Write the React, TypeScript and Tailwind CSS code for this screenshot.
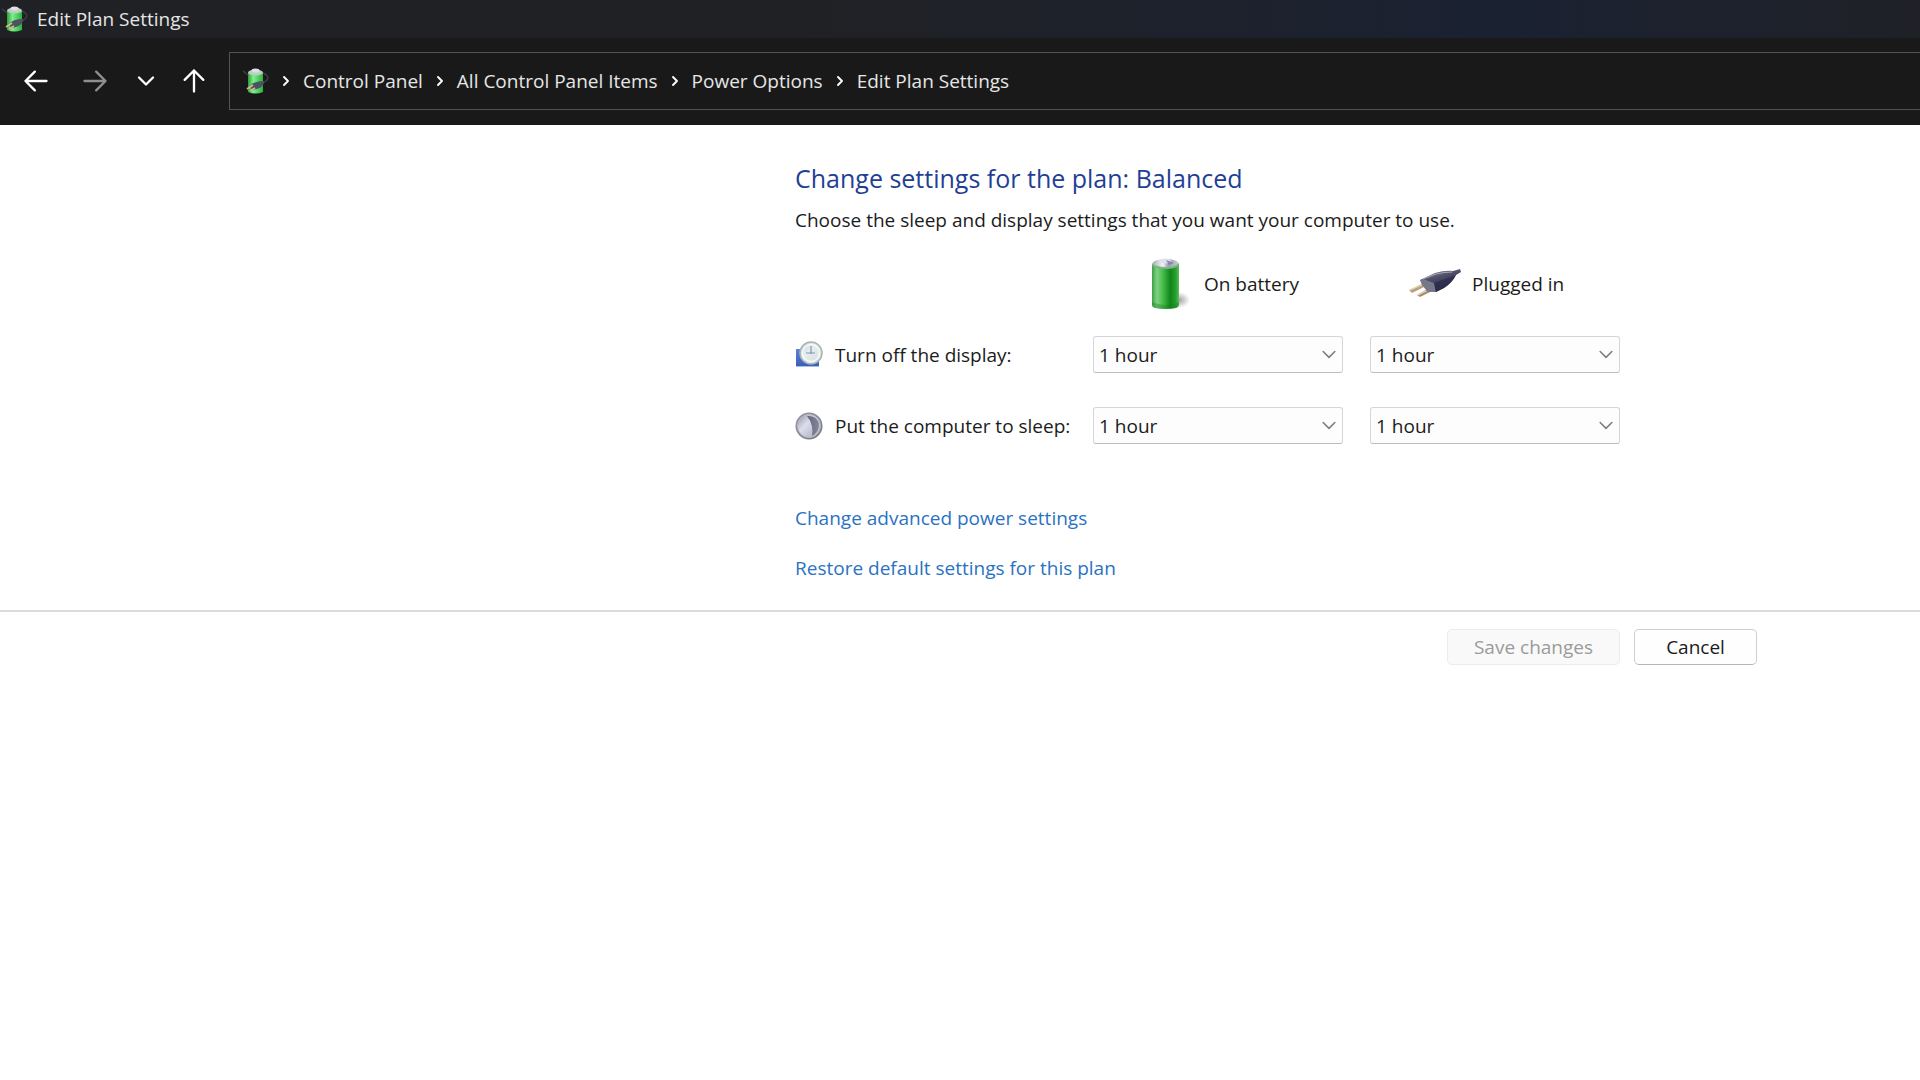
import { Fragment, ReactNode, useState } from 'react';

const breadcrumbs = ['Control Panel', 'All Control Panel Items', 'Power Options', 'Edit Plan Settings'];

const durations = [
    '1 minute',
    '5 minutes',
    '10 minutes',
    '15 minutes',
    '30 minutes',
    '1 hour',
    '2 hours',
    '5 hours',
    'Never',
];

function PowerPlanIcon() {
    return (
        <svg className="h-7 w-7 shrink-0" viewBox="0 0 28 28" aria-hidden="true">
            <defs>
                <linearGradient id="plan-body" x1="0" x2="1" y1="0" y2="0">
                    <stop offset="0" stopColor="#2f9a3c" />
                    <stop offset="0.35" stopColor="#7cf08a" />
                    <stop offset="1" stopColor="#2bb03c" />
                </linearGradient>
            </defs>
            <path d="M1 4l5 4M21 6q7 3 4 7l-5 4" fill="none" stroke="#3d3f48" strokeWidth="1.5" />
            <path d="M6 6v19q7 3 15 0V6z" fill="url(#plan-body)" />
            <ellipse cx="13.5" cy="5.5" rx="7.5" ry="3" fill="#b9cfc0" />
            <ellipse cx="13.5" cy="3.5" rx="4" ry="2" fill="#dcdfe6" />
            <path d="M8 19q4-5 14-5 0 6-7 8l-5 1z" fill="#4b5360" />
            <path d="M11 18l-6 4M13 21l-5 3" stroke="#cdb98a" strokeWidth="1.8" />
        </svg>
    );
}

function BatteryIcon() {
    return (
        <svg className="h-[54px] w-10 shrink-0" viewBox="0 0 40 54" aria-hidden="true">
            <defs>
                <linearGradient id="battery-body" x1="0" x2="1" y1="0" y2="0">
                    <stop offset="0" stopColor="#3f9f45" />
                    <stop offset="0.18" stopColor="#7fd184" />
                    <stop offset="0.4" stopColor="#46bd4b" />
                    <stop offset="0.68" stopColor="#11851a" />
                    <stop offset="0.88" stopColor="#27a02f" />
                    <stop offset="1" stopColor="#63b867" />
                </linearGradient>
                <linearGradient id="battery-cap" x1="0" x2="1" y1="0" y2="0">
                    <stop offset="0" stopColor="#a9b5b3" />
                    <stop offset="0.4" stopColor="#f4f4fb" />
                    <stop offset="0.6" stopColor="#9b9db5" />
                    <stop offset="1" stopColor="#c3ccc8" />
                </linearGradient>
                <radialGradient id="battery-shadow">
                    <stop offset="0" stopColor="#8b8b8b" stopOpacity="0.8" />
                    <stop offset="1" stopColor="#8b8b8b" stopOpacity="0" />
                </radialGradient>
            </defs>
            <ellipse cx="29" cy="43" rx="11" ry="8" fill="url(#battery-shadow)" />
            <path d="M2 7v41q0 2 3 3 10 2 21 0 3-1 3-3V7z" fill="url(#battery-body)" />
            <path d="M2 45v3q0 2 3 3 10 2 21 0 3-1 3-3v-3q-13 6-27 0z" fill="#187d20" opacity="0.35" />
            <ellipse cx="15.5" cy="7.5" rx="13.5" ry="4.5" fill="#7fb586" />
            <ellipse cx="15.5" cy="6" rx="12.5" ry="4" fill="url(#battery-cap)" />
            <ellipse cx="15" cy="4" rx="6" ry="2.5" fill="#dfdff0" />
            <path d="M16 3l8 3-5 2z" fill="#8587a6" />
        </svg>
    );
}

function PlugIcon() {
    return (
        <svg className="h-8 w-[54px] shrink-0" viewBox="0 0 54 32" aria-hidden="true">
            <defs>
                <linearGradient id="plug-body" x1="0.2" x2="0.7" y1="0" y2="1">
                    <stop offset="0" stopColor="#8d8d9b" />
                    <stop offset="0.4" stopColor="#4c4c68" />
                    <stop offset="1" stopColor="#22223f" />
                </linearGradient>
            </defs>
            <path d="M1 22l15-7 2 3-14 7z" fill="#b99f7d" />
            <path d="M2 22l14-6" stroke="#ead9bd" strokeWidth="1.2" />
            <path d="M9 27l14-8 3 3-14 7z" fill="#a68a68" />
            <path d="M10 27l14-7" stroke="#ead9bd" strokeWidth="1.2" />
            <path d="M12 12l15-7q10-3 18-2l7-2 1 3-5 3q-4 8-12 13l-8 4-9-1-4-7z" fill="url(#plug-body)" />
            <path d="M12 12l3-1 11 4 2 9-9-1-5-6z" fill="#77778a" />
            <path d="M26 15l2 9 8-4q8-5 12-13z" fill="#29294a" opacity="0.7" />
            <path d="M15 11l13-5q8-2 16-2" fill="none" stroke="#a8a8b4" strokeWidth="1" />
        </svg>
    );
}

function DisplayIcon() {
    return (
        <svg className="h-7 w-7 shrink-0" viewBox="0 0 28 28" aria-hidden="true">
            <defs>
                <linearGradient id="display-screen" x1="0" x2="0" y1="0" y2="1">
                    <stop offset="0" stopColor="#5c82d6" />
                    <stop offset="1" stopColor="#3b5fb8" />
                </linearGradient>
                <linearGradient id="display-clock" x1="0" x2="1" y1="0" y2="1">
                    <stop offset="0" stopColor="#b9c9de" />
                    <stop offset="0.4" stopColor="#e8eef0" />
                    <stop offset="1" stopColor="#cfdadb" />
                </linearGradient>
            </defs>
            <path d="M1 8h23v17H1z" fill="url(#display-screen)" />
            <path d="M1 25h23v1H1z" fill="#a9bfe8" />
            <circle cx="16" cy="12" r="11" fill="url(#display-clock)" stroke="#a9b4b6" strokeWidth="1.5" />
            <circle cx="16" cy="12" r="8.5" fill="none" stroke="#f6f9f9" strokeWidth="1.5" />
            <path d="M16 5v8M11 12h9" fill="none" stroke="#8297ad" strokeWidth="1.2" />
        </svg>
    );
}

function SleepIcon() {
    return (
        <svg className="h-7 w-7 shrink-0" viewBox="0 0 28 28" aria-hidden="true">
            <defs>
                <linearGradient id="sleep-ring" x1="0" x2="1" y1="0" y2="1">
                    <stop offset="0" stopColor="#9697a2" />
                    <stop offset="0.6" stopColor="#85868f" />
                    <stop offset="1" stopColor="#6f7078" />
                </linearGradient>
                <linearGradient id="sleep-moon" x1="0" x2="1" y1="0" y2="1">
                    <stop offset="0" stopColor="#8f90a2" />
                    <stop offset="0.4" stopColor="#dcdded" />
                    <stop offset="1" stopColor="#a4a5b6" />
                </linearGradient>
                <linearGradient id="sleep-shade" x1="0" x2="1" y1="0" y2="0">
                    <stop offset="0" stopColor="#666779" />
                    <stop offset="1" stopColor="#85869a" />
                </linearGradient>
            </defs>
            <circle cx="14" cy="14" r="13.5" fill="url(#sleep-ring)" />
            <circle cx="14" cy="14" r="11.5" fill="url(#sleep-moon)" stroke="#b9bac8" strokeWidth="1" />
            <path d="M12 4q10-1 12 8 0 8-7 12 2-11-5-20z" fill="url(#sleep-shade)" />
        </svg>
    );
}

interface IGlyphProps {
    d: string;
    className: string;
    strokeWidth?: number;
}

function Glyph({ d, className, strokeWidth = 2 }: IGlyphProps) {
    return (
        <svg
            className={className}
            viewBox="0 0 24 24"
            fill="none"
            stroke="currentColor"
            strokeWidth={strokeWidth}
            strokeLinecap="round"
            strokeLinejoin="round"
            aria-hidden="true"
        >
            <path d={d} />
        </svg>
    );
}

function DurationSelect({ label }: { label: string }) {
    const [value, setValue] = useState('1 hour');

    return (
        <div className="relative">
            <select
                aria-label={label}
                value={value}
                onChange={(e) => setValue(e.target.value)}
                className="block h-[37px] w-full appearance-none rounded-[3px] border border-[#d6d6d6] border-b-[#bdbdbd] bg-[#fdfdfd] pl-[5px] pr-8 text-[#1b1b1b]"
            >
                {durations.map((duration) => (
                    <option key={duration}>{duration}</option>
                ))}
            </select>
            <Glyph
                d="M5 9l7 7 7-7"
                strokeWidth={1.9}
                className="pointer-events-none absolute right-1 top-2 h-5 w-5 text-[#7d7d7d]"
            />
        </div>
    );
}

function SettingRow({ icon, label }: { icon: ReactNode; label: string }) {
    return (
        <>
            <div className="flex items-center gap-3 whitespace-nowrap">
                {icon}
                <span>{label}</span>
            </div>
            <DurationSelect label={`${label} On battery`} />
            <DurationSelect label={`${label} Plugged in`} />
        </>
    );
}

export default function App() {
    return (
        <div className="min-h-screen bg-white font-['Open_Sans','Noto_Sans',sans-serif] text-[19px] leading-7 text-[#1b1b1b]">
            <header className="bg-[#191919] text-[#e6e6e6]">
                <div className="flex h-[38px] items-center gap-2 bg-linear-to-r from-[#202124] from-40% via-[#1a2131] via-78% to-[#1f2127] pl-px">
                    <PowerPlanIcon />
                    <h1>Edit Plan Settings</h1>
                </div>
                <div className="flex h-[87px] items-center pb-px">
                    <nav className="flex w-[229px] shrink-0 items-center" aria-label="History">
                        <button type="button" aria-label="Back" className="ml-[22px] text-white">
                            <Glyph d="M21 12H3M11 4l-8 8 8 8" className="h-7 w-7" />
                        </button>
                        <button type="button" aria-label="Forward" className="ml-[31px] text-[#8f8f8f]">
                            <Glyph d="M3 12h18M13 4l8 8-8 8" className="h-7 w-7" />
                        </button>
                        <button type="button" aria-label="Recent locations" className="ml-[23px] text-white">
                            <Glyph d="M6 9l6 6 6-6" className="h-7 w-7" />
                        </button>
                        <button type="button" aria-label="Up" className="ml-5 text-white">
                            <Glyph d="M12 21V3M4 11l8-8 8 8" className="h-7 w-7" />
                        </button>
                    </nav>
                    <nav
                        className="flex h-[58px] flex-1 items-center border border-r-0 border-[#535353] pb-px pl-3"
                        aria-label="Address"
                    >
                        <PowerPlanIcon />
                        {breadcrumbs.map((crumb) => (
                            <Fragment key={crumb}>
                                <Glyph d="M9 6l6 6-6 6" strokeWidth={2.8} className="mx-2 h-4 w-4 text-white" />
                                <a href="#" className="whitespace-nowrap px-px">
                                    {crumb}
                                </a>
                            </Fragment>
                        ))}
                    </nav>
                </div>
            </header>

            <main>
                <div className="grid grid-cols-[minmax(0,53fr)_825px_minmax(0,20fr)]">
                    <section className="col-start-2 pb-7 pt-[35px]">
                        <h2 className="text-[25px] leading-9 text-[#1f3f95]">
                            Change settings for the plan: Balanced
                        </h2>
                        <p className="mt-[10px]">
                            Choose the sleep and display settings that you want your computer to use.
                        </p>

                        <div className="mt-[23px] grid grid-cols-[271px_250px_250px] items-center gap-x-[27px]">
                            <div className="col-start-2 flex items-center gap-[14px] pl-[57px]">
                                <BatteryIcon />
                                <span>On battery</span>
                            </div>
                            <div className="flex items-center gap-[10px] pl-[38px]">
                                <PlugIcon />
                                <span>Plugged in</span>
                            </div>
                        </div>
                        <div className="mt-[25px] grid grid-cols-[271px_250px_250px] items-center gap-x-[27px] gap-y-[34px]">
                            <SettingRow icon={<DisplayIcon />} label="Turn off the display:" />
                            <SettingRow icon={<SleepIcon />} label="Put the computer to sleep:" />
                        </div>

                        <div className="mt-[60px] flex flex-col items-start gap-[22px] text-[#2a72c3]">
                            <a href="#">Change advanced power settings</a>
                            <a href="#">Restore default settings for this plan</a>
                        </div>
                    </section>
                </div>

                <div className="flex justify-end gap-[14px] border-t-2 border-[#dcdcdc] pr-[163px] pt-[17px]">
                    <button
                        type="button"
                        disabled
                        className="h-9 w-[173px] rounded-[5px] border border-[#ececec] bg-[#f9f9f9] text-[#9b9b9b]"
                    >
                        Save changes
                    </button>
                    <button
                        type="button"
                        className="h-9 w-[123px] rounded-[5px] border border-[#cfcfcf] border-b-[#b5b5b5] bg-[#fefefe]"
                    >
                        Cancel
                    </button>
                </div>
            </main>
        </div>
    );
}
